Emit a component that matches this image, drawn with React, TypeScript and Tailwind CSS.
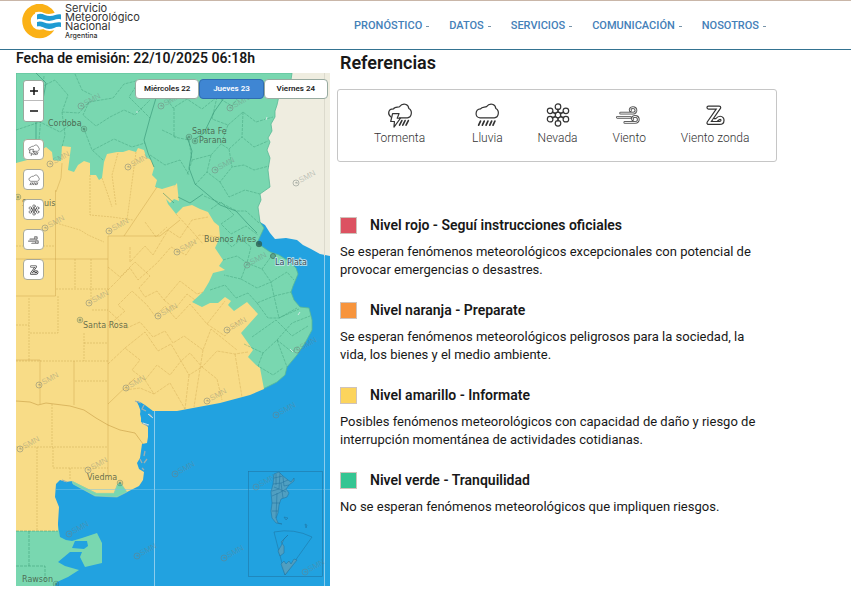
import { ReactNode, useState } from "react";

const navItems = ["PRONÓSTICO", "DATOS", "SERVICIOS", "COMUNICACIÓN", "NOSOTROS"];
const days = ["Miércoles 22", "Jueves 23", "Viernes 24"];

const levels = [
  {
    color: "bg-[#dc5261]",
    title: "Nivel rojo - Seguí instrucciones oficiales",
    text: "Se esperan fenómenos meteorológicos excepcionales con potencial de provocar emergencias o desastres.",
  },
  {
    color: "bg-[#f7943c]",
    title: "Nivel naranja - Preparate",
    text: "Se esperan fenómenos meteorológicos peligrosos para la sociedad, la vida, los bienes y el medio ambiente.",
  },
  {
    color: "bg-[#fcd45c]",
    title: "Nivel amarillo - Informate",
    text: "Posibles fenómenos meteorológicos con capacidad de daño y riesgo de interrupción momentánea de actividades cotidianas.",
  },
  {
    color: "bg-[#35c592]",
    title: "Nivel verde - Tranquilidad",
    text: "No se esperan fenómenos meteorológicos que impliquen riesgos.",
  },
];

type IconProps = { className?: string };

function IconBase({ className, children }: IconProps & { children: ReactNode }) {
  return (
    <svg
      viewBox="0 0 28 28"
      className={className}
      fill="none"
      stroke="#333"
      strokeWidth="1.3"
      strokeLinecap="round"
      strokeLinejoin="round"
      aria-hidden="true"
    >
      {children}
    </svg>
  );
}

function StormIcon({ className }: IconProps) {
  return (
    <IconBase className={className}>
      <path d="M4 16C0.500 13 1 7.500 7 7.500C8 4.500 12 6 13.500 5C17 0.500 23 2 23.500 7C28 9.500 26.500 16.500 22 17H13.500" />
      <path d="M6 12.500h7l-2 5h3.500L7.500 27 8 21H4z" />
      <path d="M16 20l-2.500 5M19.500 20L17 25M23 20L20.500 25" strokeWidth="1.700" />
    </IconBase>
  );
}

function RainIcon({ className }: IconProps) {
  return (
    <IconBase className={className}>
      <path d="M6.500 17C0.500 16.500 1 8 7 7.500C8.500 4.500 11.500 6 13.500 5C17 0.500 23 2 23.500 7C28 9.500 26.500 16.500 22 17z" />
      <path d="M7 20.500l-2 4.500M11 20.500l-2 4.500M15 20.500l-2 4.500M19 20.500l-2 4.500M22.500 20.500l-2 4.500" strokeWidth="1.800" />
    </IconBase>
  );
}

function SnowIcon({ className }: IconProps) {
  return (
    <IconBase className={className}>
      <circle cx="14" cy="14" r="3" />
      <circle cx="14" cy="5" r="3" />
      <circle cx="14" cy="23" r="3" />
      <circle cx="5.500" cy="9.500" r="3" />
      <circle cx="22.500" cy="9.500" r="3" />
      <circle cx="5.500" cy="18.500" r="3" />
      <circle cx="22.500" cy="18.500" r="3" />
      <path d="M14 8v3M14 17v3M8 11l3.400 1.500M20 11l-3.400 1.500M8 17l3.400-1.500M20 17l-3.400-1.500" strokeWidth="1.800" />
    </IconBase>
  );
}

const windPath =
  "M5 12h13.500c4 0 4-6-.3-6-2.400 0-3.400 1.800-2.700 3.300M1.500 16.500h14M9.500 22h11c5 0 4.500-6.500 0-6.500-2.600 0-3.500 2-2.500 3.500";

function WindIcon({ className }: IconProps) {
  return (
    <IconBase className={className}>
      <path d={windPath} stroke="#555" strokeWidth="3" />
      <path d={windPath} stroke="#fff" strokeWidth="1" />
    </IconBase>
  );
}

const zondaPath = "M7 6h11.500L7 22.500h12c4 0 4-5.500.5-5.500-2 0-3 1.500-4 2.500h-3";

function ZondaIcon({ className }: IconProps) {
  return (
    <IconBase className={className}>
      <path d={zondaPath} strokeWidth="4.600" />
      <path d={zondaPath} stroke="#fff" strokeWidth="2" />
    </IconBase>
  );
}

const phenomena = [
  { label: "Tormenta", Icon: StormIcon, box: "mr-3" },
  { label: "Lluvia", Icon: RainIcon, box: "" },
  { label: "Nevada", Icon: SnowIcon, box: "" },
  { label: "Viento", Icon: WindIcon, box: "" },
  { label: "Viento zonda", Icon: ZondaIcon, box: "" },
];

const watermarks = [
  [81, 106], [161, 106], [230, 108], [215, 170], [296, 183], [50, 164], [128, 167], [45, 228], [109, 231],
  [177, 252], [247, 265], [89, 303], [158, 316], [227, 330], [39, 385], [126, 388], [207, 401], [297, 350],
  [276, 415], [20, 449], [88, 470], [175, 474], [69, 534], [137, 556], [224, 558], [256, 487], [305, 572],
];

const cities = [
  { name: "Cordoba", x: 48, y: 126, cx: 84, cy: 129 },
  { name: "Santa Fe", x: 192, y: 134, cx: 189, cy: 137 },
  { name: "Parana", x: 199, y: 143, cx: 195, cy: 141 },
  { name: "San Luis", x: 22, y: 206, cx: 18, cy: 197 },
  { name: "Buenos Aires", x: 204, y: 242, cx: 259, cy: 244 },
  { name: "Santa Rosa", x: 83, y: 328, cx: 80, cy: 320 },
  { name: "Viedma", x: 87, y: 480, cx: 120, cy: 483 },
  { name: "Rawson", x: 22, y: 582, cx: 56, cy: 584 },
];

function AlertMap() {
  return (
    <svg viewBox="16 73 314 513" className="block h-auto w-full" role="img" aria-label="Mapa de alertas de Argentina">
      <rect x="16" y="73" width="314" height="513" fill="#22a2e0" />
      <path
        fill="#efede0"
        d="M285 73H330V256L320 254 311 249 303 245 297 240 286 238 275 239 270 233 265 225 260 222 250 190z"
      />
      <path
        fill="#79d7b0"
        stroke="#58b996"
        strokeWidth="0.800"
        d="M16 73H292L291 80 284 88 279 96 277 105 275 111 275 117 271 124 272 131 268 138 270 142 267 150 270 158 268 170 270 187 260 194 261 200 258 207 260 222 264 228 257 243 270 252 279 255 287 260 296 268 298 274 293 286 291 292 294 300 300 307 309 308 312 320 312 330 305 343 297 355 287 367 285 375 277 382 263 389 200 390 100 200 16 190z"
      />
      <path
        fill="#79d7b0"
        d="M16 525H58L60 537 66 540 72 541 82 538 97 533 102 543 102 563 85 567 80 557 82 552 70 552 58 562 65 566 79 570 68 577 57 582 55 586H16z"
      />
      <path fill="#22a2e0" d="M75 541l12 0 1 5-4 3-12-1z" />
      <path
        fill="#f8dc87"
        d="M16 163L31 159 43 149 46 147 52 152 53 160 61 161 62 146 71 147 68 170 74 172 78 165 84 161 90 163 90 175 96 175 99 180 102 178 104 162 107 154 117 152 123 152 129 150 136 152 138 148 144 150 146 157 151 160 154 168 152 175 157 180 155 187 162 189 175 185 173 188 177 183 178 193 179 201 174 199 170 203 166 199 168 204 176 214 183 207 192 205 200 209 208 212 214 222 219 226 220 237 215 248 223 260 219 266 225 270 213 273 209 282 203 292 192 302 202 307 210 303 218 303 225 297 231 301 228 305 234 311 247 302 258 314 241 333 253 350 248 357 256 365 260 368 264 389 250 395 220 403 193 408 177 411 153 411 145 405 140 402 136 401 141 408 140 414 142 422 148 427 148 437 147 443 142 444 140 458 137 463 139 469 144 472 143 480 139 486 127 492 120 482 117 485 114 493 96 493 72 481 66 482 60 480 56 484 55 497 59 507 58 523 58 531H16z"
      />
      <path fill="#79d7b0" stroke="#c8d79a" strokeWidth="0.500" d="M120 482L117 485 114 493 96 493 72 481 73 484 84 490 95 496 117 497 127 492z" />

      <g fill="none" stroke="#aa7a20" strokeOpacity="0.380" strokeWidth="0.700">
        <path d="M55.500 190V259H16M55.500 259H108M55.500 259V296H16M108 236V475M108 236H160L180 220M124 236L157 187" />
        <path d="M16 401L30 402 38 405 46 403 70 406 84 410 96 418 108 425 120 430 135 433 143 444" strokeWidth="1" />
        <path d="M62 163L61 178 56 192M16 360H40V404M74 361V405M108 404L135 378" />
      </g>
      <g fill="none" stroke="#aa7a20" strokeOpacity="0.350" strokeWidth="0.700" strokeDasharray="2 1">
        <path d="M16 246H55M56 223L80 230 88 235 104 242M90 175V215L112 217 133 220M118 153L112 175 116 205M136 152L127 220M102 178L108 195 112 207M75 259V289M91 259V300M56 289H108M92 310H108M16 325H29M29 298V361M58 296V333H29M84 333V361M84 343H108M16 361L108 361M75 381H108M52 404V447H108M53 447V468H108M37 447V531M16 447H52M70 468V479" />
      </g>
      <g fill="none" stroke="#aa7a20" strokeOpacity="0.320" strokeWidth="0.700" strokeDasharray="3 1">
        <path d="M108 290L130 268 138 280 157 263 171 247 186 255 199 235 220 237M108 267L120 277 135 262 150 276 139 288 145 297 157 291 164 300 180 281 197 294 203 292M130 247L130 262 145 246 153 255 168 230 180 238 192 220 208 217M176 214L191 230 203 244M145 222L156 237 167 227" />
        <path d="M108 326L125 311 118 305 132 291 147 305 155 316 165 306 176 319 190 304 207 324 225 301M109 311L127 328 140 322 153 337 165 331 173 343 184 336 203 350 211 329 237 350M108 364L125 348 140 360 132 370 145 380 157 365 170 375 181 361 189 375 202 367 217 379 222 400M125 348L145 332 158 351 171 344 181 361 190 353 202 367 217 351 235 354 248 352" />
        <path d="M203 350L194 407M189 375L185 409M145 380L154 394 170 383 185 409M125 390L140 388 154 394M235 354L242 397M207 324L225 336 241 318M164 300L175 309 187 294 195 300" />
      </g>
      <g fill="none" stroke="#2b8b68" strokeOpacity="0.500" strokeWidth="0.700" strokeDasharray="3 1">
        <path d="M44 76L42 105 39 140 41 149M35 90L55 80 68 95 62 112 79 113 89 102 113 98 124 84 140 80M16 130L40 122 60 132 74 122 84 129 92 150 103 160M62 112L65 135 62 147M89 102L83 115 96 126 110 117 124 110 135 115 150 100M93 150L114 139 132 147 145 143M140 80L129 97 150 118M75 74L82 90 92 95" />
        <path d="M161 90L173 108 187 99 202 109 217 97 232 106 243 91 253 97 271 89M174 108V137L189 140 192 161 187 175M217 97L212 119 228 125 243 112 256 122 273 117M192 160L211 155 221 144 229 149 242 137 254 147 268 141M229 149L232 167 244 165 254 170 269 166M211 155L207 172 220 182 232 167M220 182L229 197 245 190 260 194M195 185L207 172M228 125L221 144M243 112L242 137M162 130L177 137M150 155L165 165 180 160 189 175" />
        <path d="M204 196L223 204 237 211 246 211 259 223M211 209L221 202 234 215 221 224 231 234 246 226 258 235M221 237L232 247 241 239 251 247 247 263 262 269 273 254M223 260L237 256 247 263 241 279 224 275M262 269L271 282 287 272 294 280M241 279L257 288 271 282 274 296 291 292M210 290L225 285 236 298 248 293 257 303 274 296 279 318 299 309M257 303L268 318 279 318 297 308M252 337L276 320 292 336 308 326M244 344L263 353 277 340 292 352 299 346M263 353L258 366 273 375 283 368M277 340L292 323 310 316M277 340L287 367" />
      </g>
      <g fill="none" stroke="#238265" strokeOpacity="0.550" strokeWidth="0.900">
        <path d="M187 137L192 151 189 168 195 184 207 194 220 205 236 211 248 224 257 233" />
        <path d="M36 73L46 83 42 105 36 112V148M156 98L150 118 144 140 148 153 154 167M226 95L214 112 204 133 195 139" />
        <path d="M178 197L190 203 203 194M163 193L174 203" />
      </g>
      <path
        d="M29 531V566M16 566H45V582M16 531H58"
        fill="none"
        stroke="#2b8b68"
        strokeOpacity="0.600"
        strokeWidth="0.700"
        strokeDasharray="3 1"
      />
      <path d="M137 401L143 405 149 410 147 416 151 420 148 426 141 422 141 412z" fill="#22a2e0" />
      <path
        d="M135 401L141 403M144 405L142 409 146 411M149 414L152 417M142 423L148 426M145 451L144 456M147 459L144 463M140 459L142 463M142 468L144 470M62 480L67 482"
        fill="none"
        stroke="#9dafb0"
        strokeWidth="1.300"
      />
      <path d="M148 414l5 4M143 423l6 2M298 315l2-3M290 349l3 3M137 111v2M266 120l1-3" stroke="#e5edf0" strokeWidth="0.800" />

      <path d="M154.500 411V586M324.500 256V586" stroke="#9dd3ed" strokeOpacity="0.850" />
      <path d="M55 489.500H330" stroke="#75c4e9" strokeOpacity="0.500" />
      <path d="M324.500 73V256" stroke="#dcdacd" />

      <g fill="none" stroke="#737e7a" strokeOpacity="0.480">
        {watermarks.map(([x, y]) => (
          <g key={x + "-" + y} transform={`translate(${x} ${y})`}>
            <circle r="3" />
            <path d="M-1 0l2-1v2" />
            <text
              x="4"
              y="2"
              transform="rotate(-28)"
              fill="#737e7a"
              fillOpacity="0.400"
              stroke="none"
              className="font-['Liberation_Sans',sans-serif] text-[8px]"
            >
              SMN
            </text>
          </g>
        ))}
      </g>

      <g fill="#22a2e0" fillOpacity="0.100" stroke="#20709d" strokeOpacity="0.850" strokeWidth="0.600">
        <rect x="248.500" y="471.500" width="74" height="105" />
        <path
          fill="#5c9fb9"
          fillOpacity="0.800"
          d="M274 474L279 472 283 476 288 480 291 482 294 478 294 481 289 485 286 489 289 493 287 497 281 499 279 505 278 513 276 518 278 523 282 524 276 523 272 518 271 511 272 503 271 492 273 484z"
        />
        <path
          fill="none"
          d="M274 478L283 476M273 484L281 483 288 480M280 473L279 489 272 491M283 477L284 486 289 485M272 496L279 493 286 489M281 483L283 498M272 503H280M277 493L276 518M272 511H278M274 487L286 492M276 474L276 485"
        />
        <path d="M284 517l4 1-2 2zM305 524l2 1-1 3z" fill="#387e9f" />
        <path d="M274 532Q294 528 312 537L285 575z" />
        <path
          fill="#5c9fb9"
          fillOpacity="0.800"
          d="M288 535L284 539 281 546 278 551 280 556 284 553 284 546 281 542zM281 564L284 561 286 564 289 561 291 564 294 559 297 560 285 575z"
        />
      </g>

      {cities.map((city) => (
        <g key={city.name}>
          <circle cx={city.cx} cy={city.cy} r="2.800" fill="none" stroke="#3e6551" strokeOpacity="0.500" strokeWidth="0.800" />
          <circle cx={city.cx} cy={city.cy} r="1.500" fill="#3e6551" fillOpacity="0.500" />
          <text x={city.x} y={city.y} fill="#42513c" fillOpacity="0.800" className="font-['DejaVu_Sans',sans-serif] text-[8px]">
            {city.name}
          </text>
        </g>
      ))}
      <circle cx="259" cy="244" r="3" fill="#285e50" fillOpacity="0.750" />
      <circle cx="273" cy="256" r="2.500" fill="#5da78c" stroke="#4a806d" />
      <text
        x="275"
        y="265"
        fill="#34495a"
        stroke="#c6e9ee"
        strokeWidth="1.500"
        paintOrder="stroke"
        className="font-['DejaVu_Sans',sans-serif] text-[8px]"
      >
        La Plata
      </text>
    </svg>
  );
}

function Logo() {
  return (
    <a href="#inicio" className="flex items-start gap-[2px] text-[#333]">
      <svg viewBox="0 0 42 36" className="h-9 w-[42px] shrink-0" aria-hidden="true">
        <circle cx="18.500" cy="17" r="13" fill="none" stroke="#fbb116" strokeWidth="8.500" />
        <path d="M14 8.500c6-2.500 9 1.500 14 1.500s9-3 14-2v17c-5-1-8 2-13 2s-9-4-15-3z" fill="#fff" />
        <path
          d="M16 10.500c5-2.500 8 1.500 13 1.500s7-2.500 11-1.500v5c-5-1.500-7 1.500-12 1.500s-7-3-12-1.500zM16 18c5-2 8 2 13 1.500s7-2 11-1v4.500c-5-1.500-7 2-12 2s-7-3.500-12-2.500z"
          fill="#1f9bd3"
        />
      </svg>
      <span className="font-['Inter',sans-serif] text-[11px] leading-[9px]">
        <span className="block">Servicio</span>
        <span className="block">Meteorológico</span>
        <span className="block">Nacional</span>
        <span className="block text-[7px] font-medium">Argentina</span>
      </span>
    </a>
  );
}

export default function App() {
  const [day, setDay] = useState("Jueves 23");

  return (
    <div className="min-h-screen bg-white font-['Roboto',sans-serif] text-[#181818]">
      <header className="flex h-[50px] items-start justify-between border-t border-b border-t-[#c9b6a8] border-b-[#347391] pt-[3px] pr-[85px] pl-[21px]">
        <Logo />
        <nav className="mt-[14px] flex gap-5">
          {navItems.map((item) => (
            <button key={item} type="button" className="flex items-center gap-1 text-[11px] leading-4 font-medium text-[#4480b8]">
              {item}
              <span className="h-px w-[3px] bg-[#7895aa]" />
            </button>
          ))}
        </nav>
      </header>

      <main className="grid grid-cols-[314px_1fr] pl-4">
        <section>
          <h1 className="h-[23px] text-[14px] leading-4 font-semibold whitespace-nowrap">Fecha de emisión: 22/10/2025 06:18h</h1>
          <div className="relative">
            <AlertMap />
            <div className="absolute top-[7px] left-[7px] flex w-[21px] flex-col gap-[9px]">
              <div className="mb-2 overflow-hidden rounded-[3px] border border-[#9aa89d] bg-white">
                <button type="button" aria-label="Acercar" className="flex h-5 w-full items-center justify-center border-b border-[#bbb]">
                  <svg viewBox="0 0 10 10" className="size-[10px]" stroke="#111" strokeWidth="1.500">
                    <path d="M5 1v8M1 5h8" />
                  </svg>
                </button>
                <button type="button" aria-label="Alejar" className="flex h-5 w-full items-center justify-center">
                  <svg viewBox="0 0 10 10" className="size-[10px]" stroke="#111" strokeWidth="1.500">
                    <path d="M1 5h8" />
                  </svg>
                </button>
              </div>
              {phenomena.map(({ label, Icon }) => (
                <button
                  key={label}
                  type="button"
                  aria-label={label}
                  className="flex h-[21px] w-full items-center justify-center rounded-[4px] border border-[#a9aa98] bg-white"
                >
                  <Icon className="size-3" />
                </button>
              ))}
            </div>
            <div className="absolute top-[6px] right-[2px] left-[119px] grid grid-cols-3">
              {days.map((name) => (
                <button
                  key={name}
                  type="button"
                  aria-pressed={day === name}
                  onClick={() => setDay(name)}
                  className={`h-5 rounded-[4px] border text-[8px] font-semibold whitespace-nowrap ${
                    day === name ? "border-[#2f6cb0] bg-[#3f86d3] text-white" : "border-[#98aaa0] bg-white text-[#222]"
                  }`}
                >
                  {name}
                </button>
              ))}
            </div>
          </div>
        </section>

        <section className="pr-[74px] pl-[7px]">
          <h2 className="pt-[3px] pl-[3px] text-[18px] leading-5 font-semibold">Referencias</h2>
          <ul className="mt-4 flex h-[73px] items-start gap-[35px] rounded-[3px] border border-[#c6c6c6] pt-3 pl-9">
            {phenomena.map(({ label, Icon, box }) => (
              <li key={label} className={`flex flex-col items-center text-[12px] leading-4 font-light whitespace-nowrap text-[#333] ${box}`}>
                <Icon className="mb-[2px] size-[26px]" />
                {label}
              </li>
            ))}
          </ul>
          <div className="mt-[54px] flex max-w-[424px] flex-col gap-[22px] pl-[3px]">
            {levels.map((level) => (
              <article key={level.title}>
                <div className="flex items-center gap-[13px]">
                  <span className={`size-[17px] border border-[#cfc3bb] ${level.color}`} />
                  <h3 className="text-[14px] leading-[18px] font-semibold">{level.title}</h3>
                </div>
                <p className="mt-[9px] text-[13px] leading-[18px]">{level.text}</p>
              </article>
            ))}
          </div>
        </section>
      </main>
    </div>
  );
}
